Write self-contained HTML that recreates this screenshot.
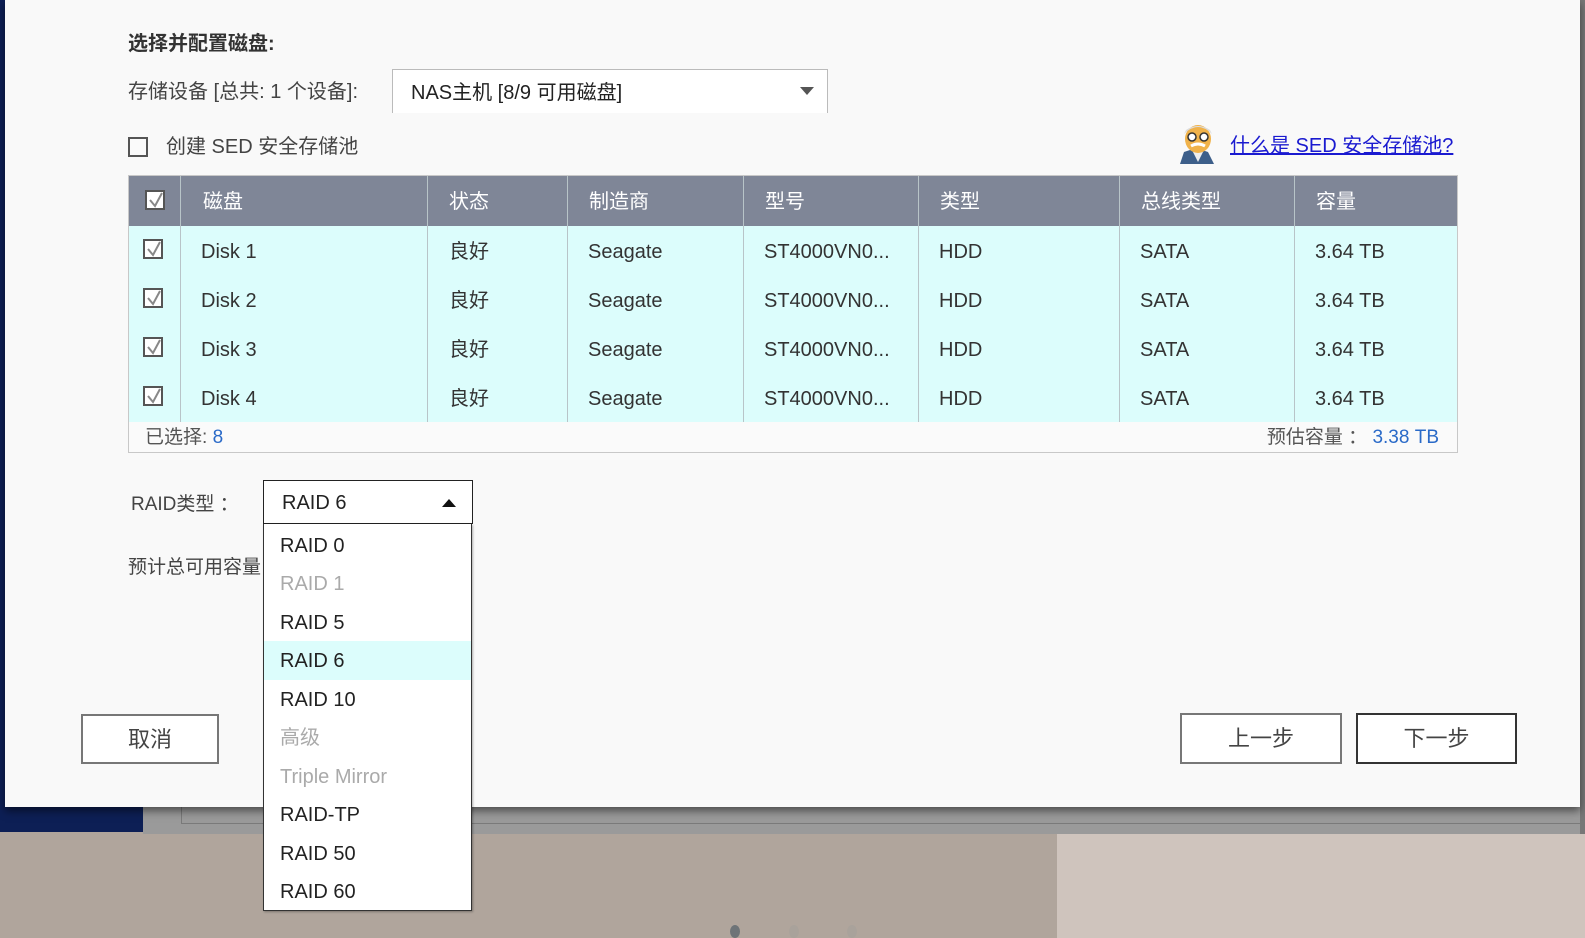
<!DOCTYPE html>
<html><head><meta charset="utf-8">
<style>
*{margin:0;padding:0;box-sizing:border-box}
body{width:1585px;height:938px;overflow:hidden;position:relative;background:#b0a59c;font-family:"Liberation Sans","Noto Sans CJK SC",sans-serif;color:#333}
.a{position:absolute}
.dlg{left:5px;top:0;width:1575px;height:807px;background:#f9f9f9;box-shadow:0 4px 8px rgba(0,0,0,.5)}
.t{position:absolute;white-space:nowrap}
.r .t,.h .t{top:2px;line-height:49px}
.cb{position:absolute;width:20px;height:20px;border:2px solid #555;background:#fff}
.cb svg{position:absolute;left:1px;top:0}
.col{position:absolute;top:0;height:246px;border-left:1px solid #b8c4c8}
.btn{position:absolute;background:#fff;border:2px solid #777;font-size:22px;text-align:center;line-height:47px;color:#444}
.it{position:absolute;left:16px;height:38px;line-height:38px;font-size:20px;color:#222}
</style></head><body>
<div class="a" style="left:0;top:0;width:5px;height:832px;background:#0d1f55"></div>
<div class="a" style="left:0;top:807px;width:143px;height:25px;background:#0d1f55"></div>
<div class="a" style="left:143px;top:807px;width:1442px;height:27px;background:#9a9a9a"></div>
<div class="a" style="left:181px;top:807px;width:1404px;height:17px;border-left:1px solid #7a7a7a;border-bottom:1px solid #7a7a7a"></div>
<div class="a" style="left:1057px;top:834px;width:528px;height:104px;background:#cfc4bd"></div>
<div class="a" style="left:1580px;top:0;width:5px;height:834px;background:#777"></div>
<div class="a" style="left:730px;top:925px;width:10px;height:13px;border-radius:50%;background:#6e7478"></div>
<div class="a" style="left:789px;top:925px;width:10px;height:13px;border-radius:50%;background:#a9a29b"></div>
<div class="a" style="left:847px;top:925px;width:10px;height:13px;border-radius:50%;background:#a9a29b"></div>

<div class="a dlg">
<div class="t" style="left:123px;top:27px;font-size:20px;font-weight:bold;color:#333">选择并配置磁盘:</div>
<div class="t" style="left:123px;top:75px;font-size:20px;color:#444">存储设备 [总共: 1 个设备]:</div>
<div class="a" style="left:387px;top:69px;width:436px;height:44px;background:#fff;border:1px solid #bbb;border-bottom:none"></div>
<div class="t" style="left:406px;top:76px;font-size:20px;color:#222">NAS主机 [8/9 可用磁盘]</div>
<div class="a" style="left:795px;top:87px;width:0;height:0;border-left:7px solid transparent;border-right:7px solid transparent;border-top:8px solid #555"></div>
<div class="cb" style="left:123px;top:137px;background:#fafafa"></div>
<div class="t" style="left:161px;top:130px;font-size:20px;color:#444">创建 SED 安全存储池</div>
<svg class="a" style="left:1171px;top:122px" width="44" height="42" viewBox="0 0 44 42"><path d="M4 42 L8 30 L20 26 L32 30 L38 42Z" fill="#3d5f8a"/><path d="M16 28 L22 40 L28 28Z" fill="#eee"/><ellipse cx="22" cy="17" rx="13" ry="14" fill="#f0b24a"/><path d="M8 12 Q22 -2 36 12 L34 8 Q22 0 10 8Z" fill="#ddd"/><circle cx="16" cy="15" r="4" fill="#fff" stroke="#333" stroke-width="1.5"/><circle cx="28" cy="15" r="4" fill="#fff" stroke="#333" stroke-width="1.5"/><path d="M15 24 Q22 20 29 24" stroke="#fff" stroke-width="3" fill="none"/></svg>
<div class="t" style="left:1225px;top:129px;font-size:20px;color:#1a1ad0;text-decoration:underline">什么是 SED 安全存储池?</div>

<div class="a" style="left:123px;top:175px;width:1330px;height:278px;border:1px solid #c8c8c8;background:#fafafa">
 <div class="a" style="left:0;top:0;width:1328px;height:50px;background:#7f8697"></div>
 <div class="a" style="left:0;top:50px;width:1328px;height:196px;background:#dcfdfc"></div>
 <div class="col" style="left:51px"></div><div class="col" style="left:298px"></div><div class="col" style="left:438px"></div><div class="col" style="left:614px"></div><div class="col" style="left:789px"></div><div class="col" style="left:990px"></div><div class="col" style="left:1165px"></div>
 <div class="a h" style="left:0;top:0;width:1328px;height:50px;font-size:20px;color:#fff">
  <span class="t" style="left:74px">磁盘</span><span class="t" style="left:320px">状态</span><span class="t" style="left:460px">制造商</span><span class="t" style="left:636px">型号</span><span class="t" style="left:811px">类型</span><span class="t" style="left:1012px">总线类型</span><span class="t" style="left:1187px">容量</span>
 </div>
 <div class="cb" style="left:16px;top:14px"><svg width="16" height="16"><path d="M2 8 L7 14 L14 1" stroke="#888" stroke-width="2" fill="none"/></svg></div>
 <div class="a r" style="left:0;top:50px;width:1328px;height:49px;font-size:20px;color:#333">
  <div class="cb" style="left:14px;top:13px"><svg width="16" height="16"><path d="M2 8 L7 14 L14 1" stroke="#888" stroke-width="2" fill="none"/></svg></div>
  <span class="t" style="left:72px">Disk 1</span><span class="t" style="left:320px">良好</span><span class="t" style="left:459px">Seagate</span><span class="t" style="left:635px">ST4000VN0...</span><span class="t" style="left:810px">HDD</span><span class="t" style="left:1011px">SATA</span><span class="t" style="left:1186px">3.64 TB</span>
 </div>
 <div class="a r" style="left:0;top:99px;width:1328px;height:49px;font-size:20px;color:#333">
  <div class="cb" style="left:14px;top:13px"><svg width="16" height="16"><path d="M2 8 L7 14 L14 1" stroke="#888" stroke-width="2" fill="none"/></svg></div>
  <span class="t" style="left:72px">Disk 2</span><span class="t" style="left:320px">良好</span><span class="t" style="left:459px">Seagate</span><span class="t" style="left:635px">ST4000VN0...</span><span class="t" style="left:810px">HDD</span><span class="t" style="left:1011px">SATA</span><span class="t" style="left:1186px">3.64 TB</span>
 </div>
 <div class="a r" style="left:0;top:148px;width:1328px;height:49px;font-size:20px;color:#333">
  <div class="cb" style="left:14px;top:13px"><svg width="16" height="16"><path d="M2 8 L7 14 L14 1" stroke="#888" stroke-width="2" fill="none"/></svg></div>
  <span class="t" style="left:72px">Disk 3</span><span class="t" style="left:320px">良好</span><span class="t" style="left:459px">Seagate</span><span class="t" style="left:635px">ST4000VN0...</span><span class="t" style="left:810px">HDD</span><span class="t" style="left:1011px">SATA</span><span class="t" style="left:1186px">3.64 TB</span>
 </div>
 <div class="a r" style="left:0;top:197px;width:1328px;height:49px;font-size:20px;color:#333">
  <div class="cb" style="left:14px;top:13px"><svg width="16" height="16"><path d="M2 8 L7 14 L14 1" stroke="#888" stroke-width="2" fill="none"/></svg></div>
  <span class="t" style="left:72px">Disk 4</span><span class="t" style="left:320px">良好</span><span class="t" style="left:459px">Seagate</span><span class="t" style="left:635px">ST4000VN0...</span><span class="t" style="left:810px">HDD</span><span class="t" style="left:1011px">SATA</span><span class="t" style="left:1186px">3.64 TB</span>
 </div>
 <div class="t" style="left:16px;top:246px;font-size:19px;color:#555">已选择: <span style="color:#2a6ac8">8</span></div>
 <div class="t" style="right:18px;top:246px;font-size:19px;color:#555">预估容量 ： <span style="color:#2a6ac8">3.38 TB</span></div>
</div>

<div class="t" style="left:126px;top:489px;font-size:19px;color:#444">RAID类型 ：</div>
<div class="t" style="left:123px;top:552px;font-size:19px;color:#444">预计总可用容量</div>
<div class="a" style="left:258px;top:480px;width:210px;height:44px;background:#fff;border:1px solid #222"></div>
<div class="t" style="left:277px;top:492px;font-size:20px;color:#222">RAID 6</div>
<div class="a" style="left:437px;top:499px;width:0;height:0;border-left:7px solid transparent;border-right:7px solid transparent;border-bottom:8px solid #111"></div>

<div class="btn" style="left:76px;top:714px;width:138px;height:50px">取消</div>
<div class="btn" style="left:1175px;top:713px;width:162px;height:51px">上一步</div>
<div class="btn" style="left:1351px;top:713px;width:161px;height:51px;border-color:#333">下一步</div>
</div>

<div class="a" style="left:263px;top:524px;width:209px;height:387px;background:#fff;border:1px solid #333;border-top:none;box-shadow:1px 1px 2px rgba(0,0,0,.3)">
 <div class="a" style="left:0;top:117px;width:207px;height:39px;background:#dcfdfc"></div>
 <div class="it" style="top:3px">RAID 0</div>
 <div class="it" style="top:41px;color:#aaa">RAID 1</div>
 <div class="it" style="top:80px">RAID 5</div>
 <div class="it" style="top:118px">RAID 6</div>
 <div class="it" style="top:157px">RAID 10</div>
 <div class="it" style="top:195px;color:#aaa">高级</div>
 <div class="it" style="top:234px;color:#aaa">Triple Mirror</div>
 <div class="it" style="top:272px">RAID-TP</div>
 <div class="it" style="top:311px">RAID 50</div>
 <div class="it" style="top:349px">RAID 60</div>
</div>
</body></html>
